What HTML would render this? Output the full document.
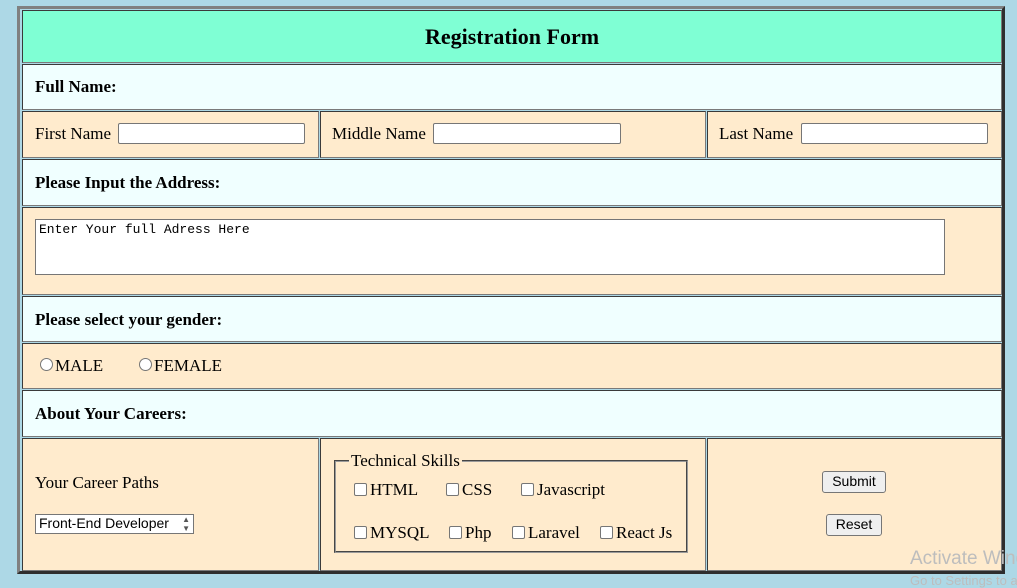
<!DOCTYPE html>
<html><head><meta charset="utf-8"><style>
body{margin:0;width:1017px;height:587px;background:#add8e6;position:relative;overflow:hidden;font-family:"Liberation Serif",serif;font-size:17px;color:#000}
.o{position:absolute;left:17px;top:6px;width:982px;height:562px;border:3px solid;border-color:#808080 #2e2e2e #2e2e2e #808080;background:#add8e6}
.c{position:absolute;box-sizing:border-box;border:1px solid;border-color:#3a3a3a #7a7a7a #7a7a7a #3a3a3a;background:#ffebcd}
.b{background:#f0ffff}
.t{position:absolute;white-space:nowrap}
.bold{font-weight:bold}
.in{position:absolute;box-sizing:border-box;background:#fff;border:1px solid #767676;border-radius:2px;height:21px}
.cb{display:inline-block;width:11px;height:11px;border:1px solid #767676;border-radius:2px;background:#fff;vertical-align:-1px;margin-right:3px}
.rd{display:inline-block;width:11px;height:11px;border:1px solid #767676;border-radius:50%;background:#fff;vertical-align:0;margin-right:2px}
.btn{position:absolute;box-sizing:border-box;border:1px solid #767676;border-radius:3px;background:#efefef;font-family:"Liberation Sans",sans-serif;font-size:14px;text-align:center;line-height:19px;height:22px}
</style></head><body>
<div class="o"></div>
<div class="c" style="left:22px;top:10px;width:980px;height:53px;background:#7fffd4"></div>
<div class="t bold" style="left:0;width:1024px;text-align:center;top:24px;font-size:22px">Registration Form</div>

<div class="c b" style="left:22px;top:64px;width:980px;height:46px"></div>
<div class="t bold" style="left:35px;top:77px">Full Name:</div>

<div class="c" style="left:22px;top:111px;width:297px;height:47px"></div>
<div class="c" style="left:320px;top:111px;width:386px;height:47px"></div>
<div class="c" style="left:707px;top:111px;width:295px;height:47px"></div>
<div class="t" style="left:35px;top:124px">First Name</div>
<div class="in" style="left:118px;top:123px;width:187px"></div>
<div class="t" style="left:332px;top:124px">Middle Name</div>
<div class="in" style="left:433px;top:123px;width:188px"></div>
<div class="t" style="left:719px;top:124px">Last Name</div>
<div class="in" style="left:801px;top:123px;width:187px"></div>

<div class="c b" style="left:22px;top:159px;width:980px;height:47px"></div>
<div class="t bold" style="left:35px;top:173px">Please Input the Address:</div>

<div class="c" style="left:22px;top:207px;width:980px;height:88px"></div>
<div class="in" style="left:35px;top:219px;width:910px;height:56px;border-radius:0"></div>
<div class="t" style="left:39px;top:222px;font-family:'Liberation Mono',monospace;font-size:13px">Enter Your full Adress Here</div>

<div class="c b" style="left:22px;top:296px;width:980px;height:46px"></div>
<div class="t bold" style="left:35px;top:310px">Please select your gender:</div>

<div class="c" style="left:22px;top:343px;width:980px;height:46px"></div>
<div class="t" style="left:40px;top:356px"><span class="rd"></span>MALE</div>
<div class="t" style="left:139px;top:356px"><span class="rd"></span>FEMALE</div>

<div class="c b" style="left:22px;top:390px;width:980px;height:47px"></div>
<div class="t bold" style="left:35px;top:404px">About Your Careers:</div>

<div class="c" style="left:22px;top:438px;width:297px;height:133px"></div>
<div class="c" style="left:320px;top:438px;width:386px;height:133px"></div>
<div class="c" style="left:707px;top:438px;width:295px;height:133px"></div>
<div class="t" style="left:35px;top:473px">Your Career Paths</div>
<div class="in" style="left:35px;top:514px;width:159px;height:20px;border-radius:0;font-family:'Liberation Sans',sans-serif;font-size:14px;line-height:17px;padding-left:3px">Front-End Developer<span style="position:absolute;right:3px;top:0;font-size:8px;color:#555;line-height:9px">▲<br>▼</span></div>

<div style="position:absolute;left:334px;top:460px;width:354px;height:93px;border:2px groove #9a9a9a;box-sizing:border-box"></div>
<div class="t" style="left:349px;top:451px;background:#ffebcd;padding:0 2px">Technical Skills</div>
<div class="t" style="left:354px;top:480px"><span class="cb"></span>HTML</div>
<div class="t" style="left:446px;top:480px"><span class="cb"></span>CSS</div>
<div class="t" style="left:521px;top:480px"><span class="cb"></span>Javascript</div>
<div class="t" style="left:354px;top:523px"><span class="cb"></span>MYSQL</div>
<div class="t" style="left:449px;top:523px"><span class="cb"></span>Php</div>
<div class="t" style="left:512px;top:523px"><span class="cb"></span>Laravel</div>
<div class="t" style="left:600px;top:523px"><span class="cb"></span>React Js</div>

<div class="btn" style="left:822px;top:471px;width:64px">Submit</div>
<div class="btn" style="left:826px;top:514px;width:56px">Reset</div>

<div class="t" style="left:910px;top:548px;font-family:'Liberation Sans',sans-serif;font-size:19px;color:#bdbdbd">Activate Windows</div>
<div class="t" style="left:910px;top:573px;font-family:'Liberation Sans',sans-serif;font-size:13px;color:#bdbdbd">Go to Settings to activate</div>
</body></html>
